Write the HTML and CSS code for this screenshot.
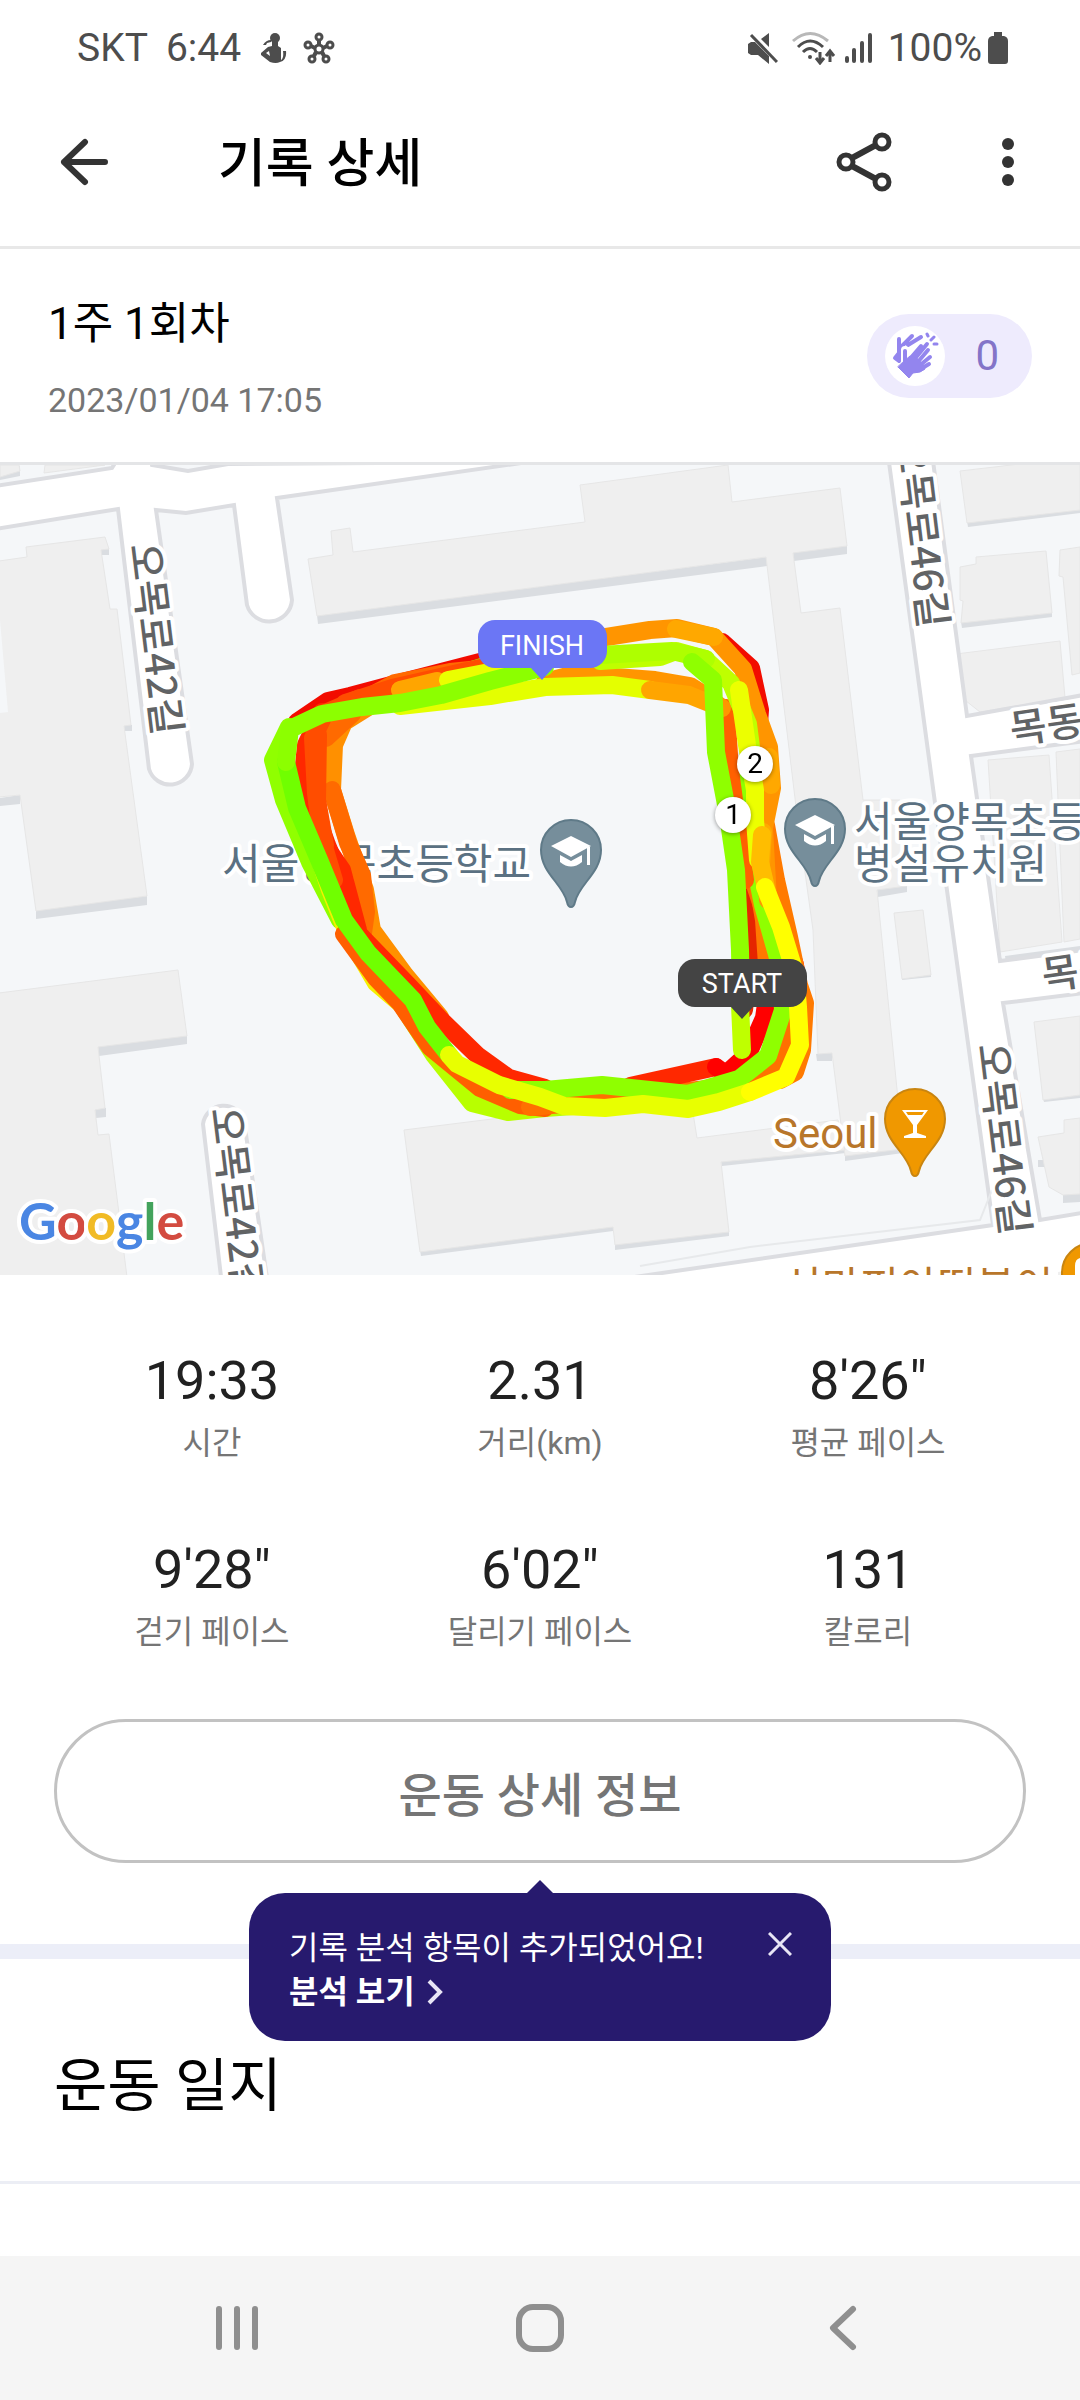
FILE: index.html
```html
<!DOCTYPE html>
<html lang="ko">
<head>
<meta charset="UTF-8">
<meta name="viewport" content="width=device-width, initial-scale=1.0">
<title>기록 상세</title>
<link rel="stylesheet" href="styles.css">
</head>
<body>
<div class="status-bar">
  <div class="status-left">
    <span>SKT</span>
    <span class="clock">6:44</span>
    <svg class="ico-coach" width="26" height="32" viewBox="0 0 26 32">
      <circle cx="14" cy="6" r="5"/>
      <path d="M11 9h6v5l3 2v12q3-2 2-9h3q1 9-6 11-4 2-10 0l-9-7q-1-1 0-2l7-6 4-1zM2 13q3-5 8-5v2l-4 1-1 2z"/>
      <path d="M5 21l3-2 1 5z" fill="#fff"/>
    </svg>
    <svg class="ico-net" width="32" height="32" viewBox="0 0 32 32" fill="none" stroke="#4d4d4d" stroke-width="3">
      <circle cx="16" cy="17" r="4"/><circle cx="16" cy="5" r="3"/><circle cx="27" cy="13" r="3"/><circle cx="23" cy="27" r="3"/><circle cx="9" cy="27" r="3"/><circle cx="5" cy="13" r="3"/>
      <path d="M16 8v5M24 14l-4 2M21 24l-2-4M11 24l2-4M8 14l4 2" stroke-width="4"/>
    </svg>
  </div>
  <div class="status-right">
    <svg width="30" height="32" viewBox="0 0 30 32">
      <path d="M0 12l3-2h4L21 24v8L10 23H3l-3-2zM13 7l8-6v14z"/>
      <path d="M3 3l26 27" stroke="#4d4d4d" stroke-width="3"/>
    </svg>
    <svg class="ico-wifi" width="44" height="34" viewBox="0 0 44 34" fill="none" stroke="#4d4d4d" stroke-width="3">
      <path d="M1 10Q18-5 36 10" stroke="#b8b8b8"/>
      <path d="M6 16Q18 4 31 16M11 21Q18 14 25 21M28 21v11M24 27l4 5 4-5M38 31V20M34 25l4-5 4 5"/>
      <circle cx="18" cy="26" r="2" fill="#4d4d4d" stroke="none"/>
    </svg>
    <svg class="ico-signal" width="28" height="32" viewBox="0 0 28 32" stroke="#4d4d4d" stroke-width="4" stroke-linecap="round">
      <path d="M3 26v3M10 18v11M18 11v18M26 3v26"/>
    </svg>
    <span>100%</span>
    <svg class="ico-battery" width="20" height="32" viewBox="0 0 20 32">
      <path d="M6 0h8v4h2q4 1 4 5v20q0 3-3 3H3q-3 0-3-3V9q0-4 4-5h2z"/>
    </svg>
  </div>
</div>

<header class="app-bar">
  <button class="icon-btn" aria-label="뒤로">
    <svg width="48" height="48" viewBox="0 0 48 48" fill="none" stroke="#333" stroke-width="6" stroke-linecap="round" stroke-linejoin="round"><path d="M25 4L4 24l21 20M4 24h41"/></svg>
  </button>
  <h1 class="page-title">기록 상세</h1>
  <button class="icon-btn" aria-label="공유">
    <svg width="56" height="60" viewBox="0 0 56 60" fill="none" stroke="#333" stroke-width="5"><circle cx="10" cy="30" r="7"/><circle cx="46" cy="10" r="7"/><circle cx="46" cy="50" r="7"/><path d="M16 26l24-13M16 34l24 13" stroke-width="6"/></svg>
  </button>
  <button class="icon-btn more-btn" aria-label="더보기">
    <svg width="14" height="50" viewBox="0 0 14 50" fill="#333"><circle cx="7" cy="7" r="6"/><circle cx="7" cy="25" r="6"/><circle cx="7" cy="43" r="6"/></svg>
  </button>
</header>

<section class="session">
  <div>
    <h2 class="session-name">1주 1회차</h2>
    <p class="session-date">2023/01/04 17:05</p>
  </div>
  <button class="clap">
    <span class="clap-icon">
      <svg width="48" height="48" viewBox="0 0 48 48" fill="none" stroke="#9385ee" stroke-width="4" stroke-linecap="round" stroke-linejoin="round">
        <path d="M8 7v14l-4 5 4 3zM10 15L21 4M17 13L30 5"/>
        <path d="M18 28L30 14M22 29L36 12M26 31L37 18M28 34L39 25M28 38L38 32"/>
        <path d="M14 18v14" stroke="#fff" stroke-width="8"/>
        <path d="M14 19v12"/>
        <path d="M12 30L19 24 27 27 33 34 34 37Q30 41 22 41L18 46 14 42 7 35z" fill="#9385ee" stroke-width="1"/>
        <path d="M36 2l1 2M40 8l3-3M43 12h3" stroke-width="3"/>
      </svg>
    </span>
    <span>0</span>
  </button>
</section>

<svg class="map" viewBox="0 465 1080 810" role="img" aria-label="운동 경로 지도">
  <defs>
    <path id="pin" d="M0 57Q-3 57-4 52C-8 34-30 23-30 0A30 30 0 0 1 30 0C30 23 8 34 4 52Q3 57 0 57z"/>
    <g id="cap" fill="#fff">
      <path d="M0-15L20-5 0 6-20-5zM-11 4v7Q0 20 11 11V4L0 10z"/>
      <path d="M16-4h3v18h-3z"/>
    </g>
  </defs>
  <rect y="465" width="1080" height="810" fill="#f5f7f9"/>

  <!-- building shadows -->
  <g class="shade">
    <path d="M0 470l20-4v10L0 480zM0 798l20-3v9L0 806zM36 910l111-14v9L36 919zM100 548h9v7h-9zM124 725h8v6h-8z"/>
    <path d="M317 615L767 557v9L318 624zM793 552l54-7v9l-53 7zM98 1046l89-11v9l-88 12zM95 1109l11-1v9l-10 1z"/>
    <path d="M420 1250l193-24v5L421 1256zM615 1241l114-11v6l-114 14zM721 1161l125-13v5l-124 13z"/>
    <path d="M816 1054l16-2v9h-15zM845 1154l58-7v6l-58 8zM877 889l30-4v7l-29 5zM967 521l113-13v5l-112 14zM961 622l91-10v5l-90 11zM980 710l100-14v9l-97 12z"/>
    <path d="M902 977l29-4v4l-29 3zM1043 1098l37-6v6l-36 4zM1063 1193h17v9l-17 1zM1038 1160h6v7h-6zM1005 956l75-10v9l-74 8z"/>
  </g>
  <g class="building">
    <path d="M0 465h19l1 6-20 6zM45 465h60l-61 8z"/>
    <path d="M-1 561l28-4-1-10 79-10 4 12-8 1 9 59h7l14 116-7 1 23 170-111 15-16-116-21 2z"/>
    <path d="M308 559L333 555 331 531 350 528 353 552 585 522 580 485 728 465 732 502 840 488 847 546 793 553 801 613 840 608 863 800 900 800 907 886 877 890 903 1149 845 1156 832 1053 818 1054 813 930 797 815 766 557 317 616z"/>
    <path d="M404 1130L500 1118 690 1094 697 1138 838 1120 845 1150 721 1162 729 1232 615 1245 613 1227 420 1252z"/>
    <path d="M-1 993l179-23 9 66-89 11 7 61-10 2 3 25 11-1 19 151H-1z"/>
    <path d="M960 471l120-14v53l-113 13zM960 567l16-3v-7l70-6 6 62-91 10 2-22-3-1zM1060 550l20-3v126l-8 2-9-98-4-1zM956 654l104-13 5 57-85 14-19-15z"/>
    <path d="M988 760l61-5 13 187-62 10zM1056 752l24-3v190l-16 3zM894 913l29-3 8 65-29 4zM1034 1022l46-6v79l-37 5zM1038 1137l26-4v-13l16-2v76l-17 1-14-8z"/>
  </g>
  <path d="M0 620l8 92-8 1z" fill="#f5f7f9"/>

  <!-- streets -->
  <g class="street">
    <path d="M-5 486L112 468 120 455h30l2 10 36 6 40-7 300-2-251 36 15 102a23 23 0 0 1-45 5l-13-100-48 8-30-3 36 254a22 22 0 0 1-43 5L118 509-5 529z"/>
    <path d="M222 1285l-19-161a21 21 0 0 1 41-3l24 164z"/>
    <path d="M888 455l50 370 55 400L600 1282h500v-72l-60 10-37-217 97-12v-43l-100 13-29-205 129-17v-47l-133 24-36-270z"/>
  </g>
  <path d="M640 1266l110-19 230-27 12-30" fill="none" stroke="#e7e9eb" stroke-width="2"/>
  <path d="M1058 1272l22-3v10h-22z" fill="#efefef"/>

  <g class="road-name">
    <text transform="translate(130 545) rotate(83)">오목로42길</text>
    <text transform="translate(211 1109) rotate(83)">오목로42길</text>
    <text transform="translate(896 438) rotate(83)">오목로46길</text>
    <text transform="translate(978 1045) rotate(83)">오목로46길</text>
    <text transform="translate(1012 744) rotate(-8)">목동</text>
    <text transform="translate(1044 990) rotate(-8)">목동</text>
  </g>

  <g class="place">
    <text x="222" y="879">서울양목초등학교</text>
    <text x="854" y="837">서울양목초등</text>
    <text x="854" y="879">병설유치원</text>
    <text class="food" x="773" y="1148">Seoul</text>
    <text class="food" x="783" y="1302">신마피아떡볶이</text>
  </g>
  <g fill="#768e9b" stroke="#5f7a88" stroke-width="2">
    <use href="#pin" x="571" y="850"/>
    <use href="#pin" x="815" y="829"/>
  </g>
  <use href="#cap" x="571" y="851"/>
  <use href="#cap" x="815" y="830"/>
  <g fill="#f09800" stroke="#c98510" stroke-width="2">
    <use href="#pin" x="915" y="1119"/>
    <use href="#pin" x="1092" y="1273"/>
  </g>
  <path d="M902 1110h26l-11 15v8l9 3v2h-22v-2l9-3v-8z" fill="#fff"/>
  <path d="M906 1112h18l-2 3h-14z" fill="#f09800"/>
  <path d="M1080 1258q-5 1-5 8v12h5z" fill="#fff"/>

  <g class="route">
    <path stroke="#f20c00" d="M297 722L328 701 350 696 395 684 480 662 545 643"/>
    <path stroke="#f20c00" d="M722 642L751 668 760 710 757 750 752 800 756 860 782 930 795 965 800 1000 786 1060"/>
    <path stroke="#e52500" d="M736 830L742 880 749 930 750 960 744 1010"/>
    <path stroke="#ff7a00" d="M766 825L776 880 789 937 799 985 805 1003 802 1050 795 1072 780 1080"/>
    <path stroke="#ff6a00" d="M340 712L395 683 450 672 490 668"/>
    <path stroke="#90ff00" d="M450 677L545 647 M289 727L273 760 284 800 310 862 340 920"/>
    <path stroke="#f5f000" d="M300 800L330 890 348 935 376 983 402 1005"/>
    <path stroke="#b8ff00" d="M402 1005L434 1055 472 1103 508 1112 545 1108 600 1104"/>
    <path stroke="#ff5f00" d="M344 934L376 978 400 1003 430 1047 480 1088 520 1105 545 1108"/>
    <path stroke="#ff9000" d="M376 702L344 722 334 745 332 790 346 835 365 890 372 930 405 975 440 1017"/>
    <path stroke="#ff6a00" d="M352 714L326 738M332 790L348 843 362 875 366 912 362 940"/>
    <path stroke="#ff2800" d="M322 712L306 745 304 765 311 800 327 845 345 888 355 930 408 985 440 1019 477 1055 509 1078 545 1088"/>
    <path stroke="#ff2800" d="M325 845L342 870 350 900 358 930"/>
    <path stroke="#ff4d00" d="M360 698L325 713 313 738 316 793 322 840 334 880"/>
    <path stroke="#ff4d00" d="M318 735L317 800 325 845"/>
    <path stroke="#ff7000" d="M530 1107L605 1100 688 1091 747 1085 778 1067 790 1025 783 980 770 930 750 870 744 820"/>
    <path stroke="#ff2800" d="M630 1086L716 1067"/>
    <path stroke="#ff0000" d="M716 1067L726 1074 748 1054 764 1018 768 990"/>
    <path stroke="#ff7800" d="M752 850L764 920 768 980"/>
    <path stroke="#8fff00" d="M510 1090L545 1090 602 1085 688 1094 739 1079 768 1056 783 1010 780 965 763 905 750 840 742 780"/>
    <path stroke="#ff6000" d="M726 708L730 770 738 830 745 880"/>
    <path stroke="#ff9500" d="M545 682L575 674 655 680 690 686 706 696 722 708"/>
    <path stroke="#e4ff00" d="M400 706L490 696 545 687 612 685 650 690"/>
    <path stroke="#ffa500" d="M650 690L689 695 714 705"/>
    <path stroke="#ff4d00" d="M345 703L392 688 480 668 540 650"/>
    <path stroke="#ffa500" d="M400 690L437 681"/>
    <path stroke="#eaff00" d="M448 680L500 670"/>
    <path stroke="#ff9500" d="M600 638L650 630 677 628 714 637 743 669 757 714 769 747 772 788 764 828 768 900"/>
    <path stroke="#ffa800" d="M676 629L714 637M769 757L771 785M763 832L761 865"/>
    <path stroke="#bfff00" d="M600 661L660 657 676 651 705 659 731 683 748 724 754 770"/>
    <path stroke="#aeff00" d="M600 655L672 651 706 659"/>
    <path stroke="#bfff00" d="M742 1050L740 1005"/>
    <path stroke="#8fff00" d="M692 662L713 680 716 752 728 815 736 870 740 950 741 1005"/>
    <path stroke="#ecff00" d="M739 690L747 745 755 790 755 820 758 860"/>
    <path stroke="#ffbd00" d="M762 835L760 862 768 896"/>
    <path stroke="#70ff00" d="M286 762L297 808 320 862 344 920 368 953 413 1000 427 1027 449 1055"/>
    <path stroke="#8cff00" d="M545 667L490 681 441 695 400 703 362 707 322 714 290 729 286 762"/>
    <path stroke="#e8ff00" d="M449 1055L457 1064 499 1085 540 1097 564 1106 605 1108 643 1104 688 1109 719 1102 750 1092"/>
    <path stroke="#ffff00" d="M765 887L781 927 795 973 798 1007 800 1045 786 1077 750 1092"/>
  </g>

  <!-- km markers -->
  <g class="km">
    <circle cx="755" cy="764" r="18"/><text x="755" y="773">2</text>
    <circle cx="733" cy="815" r="18"/><text x="733" y="824">1</text>
  </g>
  <g class="flag">
    <path fill="#6b76f5" d="M495 620h95a17 17 0 0 1 17 17v14a17 17 0 0 1-17 17h-37l-11 12-11-12h-36a17 17 0 0 1-17-17v-14a17 17 0 0 1 17-17z"/>
    <text x="542" y="655">FINISH</text>
    <path fill="#444" d="M695 959h95a17 17 0 0 1 17 17v14a17 17 0 0 1-17 17h-37l-11 12-11-12h-36a17 17 0 0 1-17-17v-14a17 17 0 0 1 17-17z"/>
    <text x="742" y="993">START</text>
  </g>
  <text class="google" x="19" y="1240"><tspan fill="#4a86e3">G</tspan><tspan fill="#d34b40">o</tspan><tspan fill="#f1bb25">o</tspan><tspan fill="#4a86e3">g</tspan><tspan fill="#43a35c">l</tspan><tspan fill="#d34b40">e</tspan></text>
</svg>

<dl class="stats">
  <div class="stat"><dd>19:33</dd><dt>시간</dt></div>
  <div class="stat"><dd>2.31</dd><dt>거리(km)</dt></div>
  <div class="stat"><dd>8'26"</dd><dt>평균 페이스</dt></div>
  <div class="stat"><dd>9'28"</dd><dt>걷기 페이스</dt></div>
  <div class="stat"><dd>6'02"</dd><dt>달리기 페이스</dt></div>
  <div class="stat"><dd>131</dd><dt>칼로리</dt></div>
</dl>

<div class="detail">
  <button class="detail-btn">운동 상세 정보</button>
  <div class="tooltip">
    <div>
      <p>기록 분석 항목이 추가되었어요!</p>
      <a href="#analysis" class="tooltip-link">분석 보기
        <svg width="16" height="26" viewBox="0 0 16 26" fill="none" stroke="#e8e5f5" stroke-width="4"><path d="M2 2l11 11L2 24"/></svg>
      </a>
    </div>
    <button class="close-btn" aria-label="닫기">
      <svg width="24" height="24" viewBox="0 0 24 24" stroke="#e8e5f5" stroke-width="3"><path d="M1 1l22 22M23 1L1 23"/></svg>
    </button>
  </div>
</div>

<section class="diary">
  <h2 class="diary-title">운동 일지</h2>
</section>

<nav class="nav-bar">
  <button aria-label="최근 앱"><svg width="48" height="48" viewBox="0 0 48 48" stroke="#8f8f8f" stroke-width="6" stroke-linecap="round"><path d="M6 5v38M24 5v38M42 5v38"/></svg></button>
  <button aria-label="홈"><svg width="48" height="48" viewBox="0 0 48 48" fill="none" stroke="#8f8f8f" stroke-width="6"><rect x="3" y="3" width="42" height="42" rx="14"/></svg></button>
  <button aria-label="뒤로 가기"><svg width="48" height="48" viewBox="0 0 48 48" fill="none" stroke="#8f8f8f" stroke-width="6" stroke-linecap="round" stroke-linejoin="round"><path d="M34 5L14 24l20 19"/></svg></button>
</nav>
</body>
</html>
```
FILE: styles.css
```css
/* styles.css */
* {
  box-sizing: border-box;
}

body {
  margin: 0;
  min-height: 100vh;
  display: flex;
  flex-direction: column;
  background-color: #fff;
  color: #000;
  font-family: Roboto, 'Noto Sans CJK KR', sans-serif;
}

h1, h2, p, dl, dd {
  margin: 0;
}

svg {
  display: block;
  flex-shrink: 0;
}

button {
  border: 0;
  padding: 0;
  background: none;
  color: inherit;
  font-family: inherit;
  cursor: pointer;
}

/* status bar */
.status-bar {
  display: flex;
  justify-content: space-between;
  align-items: center;
  height: 96px;
  padding: 0 72px 0 77px;
  color: #4d4d4d;
  fill: #4d4d4d;
  font-size: 39px;
  line-height: 44px;
}

.status-left,
.status-right {
  display: flex;
  align-items: center;
}

.clock {
  margin-left: 18px;
}

.ico-coach {
  margin-left: 20px;
}

.ico-net {
  margin-left: 16px;
}

.ico-wifi {
  margin-left: 14px;
}

.ico-signal {
  margin: 0 16px 0 8px;
}

.ico-battery {
  margin-left: 6px;
}

/* app bar */
.app-bar {
  display: flex;
  align-items: center;
  height: 153px;
  padding: 0 65px 18px 60px;
  border-bottom: 3px solid #e8e8e8;
}

.page-title {
  flex: 1;
  margin-left: 110px;
  padding-top: 6px;
  font-size: 52px;
  font-weight: 500;
  line-height: 60px;
}

.more-btn {
  margin-left: 109px;
}

/* session */
.session {
  display: flex;
  justify-content: space-between;
  align-items: center;
  height: 216px;
  padding: 0 48px;
  border-bottom: 3px solid #e4e5e7;
}

.session-name {
  font-size: 44px;
  font-weight: 400;
  line-height: 64px;
}

.session-date {
  margin-top: 24px;
  color: #757575;
  font-size: 34px;
  line-height: 40px;
}

.clap {
  display: flex;
  align-items: center;
  gap: 30px;
  height: 84px;
  padding: 0 33px 0 18px;
  border-radius: 42px;
  background-color: #eeebfd;
  color: #8374c8;
  font-size: 42px;
}

.clap-icon {
  display: flex;
  justify-content: center;
  align-items: center;
  width: 60px;
  height: 60px;
  border-radius: 50%;
  background-color: #fff;
}

/* map */
.map {
  width: 100%;
  height: auto;
}

.shade {
  fill: #dadde1;
}

.building {
  fill: #efefef;
  stroke: #e6e6e6;
}

.street {
  fill: #fff;
  stroke: #dcdde1;
  stroke-width: 4px;
}

.road-name,
.place {
  font-family: 'Noto Sans CJK KR', sans-serif;
  font-size: 40px;
  fill: #616365;
  stroke: #fff;
  stroke-width: 8px;
  stroke-linejoin: round;
  paint-order: stroke;
}

.road-name {
  font-weight: 500;
}

.place {
  font-size: 42px;
  fill: #5b7182;
}

.food {
  font-family: Roboto, 'Noto Sans CJK KR', sans-serif;
  fill: #b8762a;
}

.route {
  fill: none;
  stroke-width: 18px;
  stroke-linecap: round;
  stroke-linejoin: round;
}

.km {
  fill: #fff;
  font-size: 28px;
  text-anchor: middle;
  filter: drop-shadow(0 1px 2px rgba(0, 0, 0, 0.4));
}

.km text {
  fill: #000;
}

.flag {
  font-size: 27px;
  text-anchor: middle;
}

.flag text {
  fill: #fff;
}

.google {
  font-family: Lato, sans-serif;
  font-size: 52px;
  font-weight: 700;
  stroke: #fff;
  stroke-width: 8px;
  stroke-linejoin: round;
  paint-order: stroke;
}

/* stats */
.stats {
  display: grid;
  grid-template-columns: repeat(3, 1fr);
  row-gap: 69px;
  padding: 72px 48px 63px;
  text-align: center;
}

.stat {
  display: flex;
  flex-direction: column;
  gap: 4px;
}

.stat dd {
  color: #212121;
  font-size: 54px;
  line-height: 68px;
}

.stat dt {
  color: #757575;
  font-size: 32px;
  line-height: 48px;
}

/* detail button + tooltip */
.detail {
  position: relative;
  padding: 0 54px 81px;
  border-bottom: 15px solid #eceef8;
}

.detail-btn {
  width: 100%;
  height: 144px;
  border: 3px solid #c2c2c2;
  border-radius: 72px;
  color: #757575;
  font-size: 47px;
  font-weight: 500;
}

.tooltip {
  position: absolute;
  top: 174px;
  left: 50%;
  transform: translateX(-50%);
  display: flex;
  justify-content: space-between;
  width: 582px;
  height: 148px;
  padding: 33px 39px 27px 40px;
  border-radius: 36px;
  background-color: #271a6e;
  color: #fff;
  font-size: 32px;
  line-height: 44px;
}

.tooltip::before {
  content: "";
  position: absolute;
  top: -13px;
  left: 50%;
  margin-left: -13px;
  border: 13px solid transparent;
  border-top: 0;
  border-bottom-color: #271a6e;
}

.tooltip-link {
  display: flex;
  align-items: center;
  gap: 12px;
  color: #fff;
  font-weight: 700;
  text-decoration: none;
}

.close-btn {
  align-self: flex-start;
  margin-top: 6px;
}

/* diary */
.diary {
  padding: 87px 54px 54px;
  border-bottom: 3px solid #eceef5;
}

.diary-title {
  font-size: 58px;
  font-weight: 400;
  line-height: 81px;
}

/* system navigation */
.nav-bar {
  display: flex;
  justify-content: space-around;
  align-items: center;
  height: 144px;
  margin-top: auto;
  padding: 0 86px;
  background-color: #f5f5f5;
}
```
